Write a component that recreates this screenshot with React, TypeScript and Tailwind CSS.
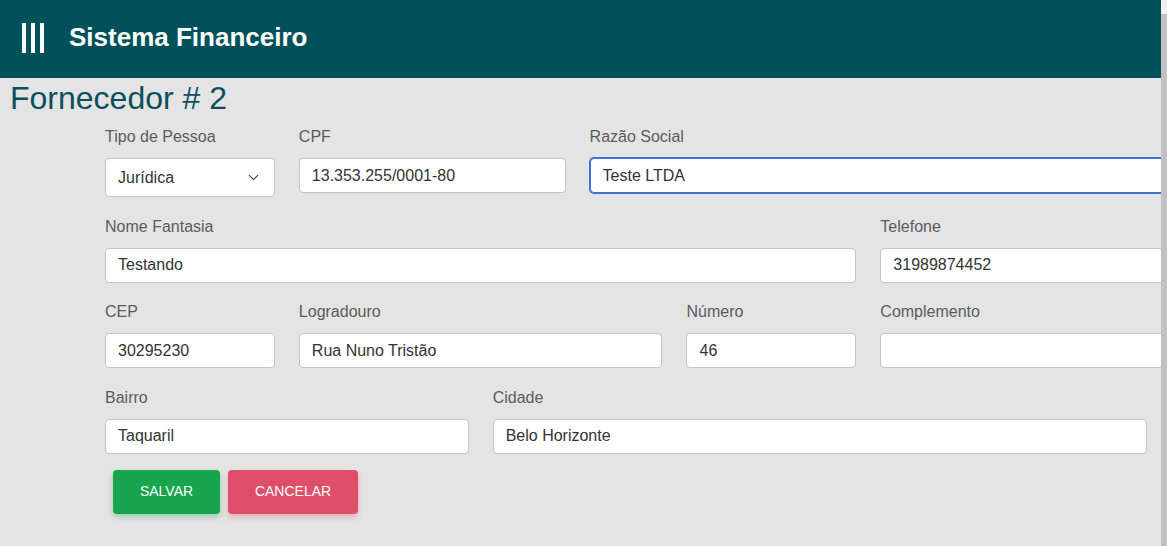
import { ChevronDown } from "lucide-react";

type FieldProps = {
    label: string;
    value: string;
    span: string;
    focused?: boolean;
};

function Field({ label, value, span, focused }: FieldProps) {
    return (
        <div className={`${span} flex flex-col`}>
            <label className="text-[16px] leading-[19px] text-[#5b5b5b] mb-3">
                {label}
            </label>
            <input
                readOnly
                value={value}
                className={
                    focused
                        ? "h-[35px] w-full rounded-[4px] bg-white px-3 text-[16px] text-[#333] border border-[#3b74d3] ring-1 ring-[#3b74d3] outline-none"
                        : "h-[35px] w-full rounded-[4px] bg-white px-3 text-[16px] text-[#333] border border-[#c4c4c4] outline-none"
                }
            />
        </div>
    );
}

export default function App() {
    return (
        <div
            className="flex h-[546px] w-[1167px] overflow-hidden bg-[#e4e4e4]"
            style={{ fontFamily: '"Liberation Sans", Arial, sans-serif' }}
        >
            <div className="w-[1161px] shrink-0 overflow-hidden">
                {/* Top bar */}
                <header className="h-[78px] bg-[#02515a] flex items-center pl-[22px] pb-[3px]">
                    <div className="flex gap-[5px]">
                        <span className="block w-[4px] h-[30px] bg-white" />
                        <span className="block w-[4px] h-[30px] bg-white" />
                        <span className="block w-[4px] h-[30px] bg-white" />
                    </div>
                    <h1 className="ml-[25px] text-white font-bold text-[26px]">
                        Sistema Financeiro
                    </h1>
                </header>

                <h2 className="pl-[10px] text-[32px] leading-[38px] text-[#0c4f5b] mt-px">
                    Fornecedor # 2
                </h2>

                <form className="ml-[105px] mt-[10px] w-[1139px] grid grid-cols-12 gap-x-6 gap-y-[19.5px]">
                    <div className="col-span-2 flex flex-col">
                        <label className="text-[16px] leading-[19px] text-[#5b5b5b] mb-3">
                            Tipo de Pessoa
                        </label>
                        <div className="h-[39px] rounded-[4px] bg-white border border-[#c4c4c4] flex items-center justify-between pl-3 pr-[12px] text-[16px] text-[#333]">
                            <span>Jurídica</span>
                            <ChevronDown size={17} strokeWidth={1.5} className="text-[#444]" />
                        </div>
                    </div>
                    <div className="col-span-3 self-start">
                        <Field label="CPF" value="13.353.255/0001-80" span="" />
                    </div>
                    <div className="col-span-7 self-start">
                        <Field label="Razão Social" value="Teste LTDA" span="" focused />
                    </div>

                    <Field label="Nome Fantasia" value="Testando" span="col-span-8" />
                    <Field label="Telefone" value="31989874452" span="col-span-4" />

                    <Field label="CEP" value="30295230" span="col-span-2" />
                    <Field label="Logradouro" value="Rua Nuno Tristão" span="col-span-4" />
                    <Field label="Número" value="46" span="col-span-2" />
                    <Field label="Complemento" value="" span="col-span-4" />

                    <Field label="Bairro" value="Taquaril" span="col-span-4" />
                    <Field label="Cidade" value="Belo Horizonte" span="col-span-7" />
                </form>

                <div className="ml-[113px] mt-[16px] flex gap-2">
                    <button className="h-[44px] w-[107px] rounded-[4px] bg-[#17a44d] text-white text-[14px] shadow-[0_3px_6px_rgba(23,164,77,0.35)]">
                        SALVAR
                    </button>
                    <button className="h-[44px] w-[130px] rounded-[4px] bg-[#de4e68] text-white text-[14px] shadow-[0_3px_6px_rgba(222,78,104,0.35)]">
                        CANCELAR
                    </button>
                </div>
            </div>

            {/* scrollbar */}
            <div className="w-[6px] shrink-0 flex flex-col bg-[#c1c1c1]">
                <div className="h-[14px] bg-[#f1f1f1]" />
            </div>
        </div>
    );
}
